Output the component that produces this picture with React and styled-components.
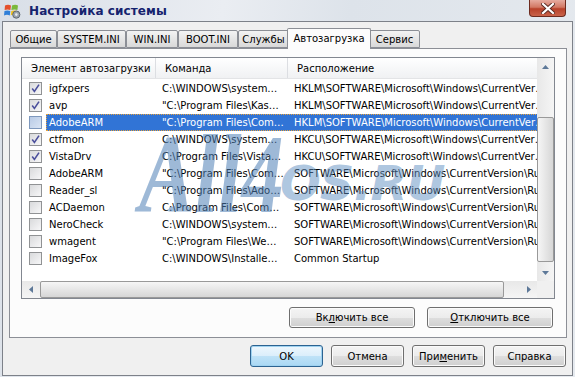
import styled, { createGlobalStyle } from 'styled-components'

const GlobalStyle = createGlobalStyle`
  html, body { margin: 0; padding: 0; }
  body {
    font-family: "DejaVu Sans", Verdana, sans-serif;
    font-size: 10px;
    color: #000;
    background: #dfe4eb;
  }
`

const rows = [
  { on: true, name: 'igfxpers', cmd: 'C:\\WINDOWS\\system…', loc: 'HKLM\\SOFTWARE\\Microsoft\\Windows\\CurrentVer…' },
  { on: true, name: 'avp', cmd: '"C:\\Program Files\\Kas…', loc: 'HKLM\\SOFTWARE\\Microsoft\\Windows\\CurrentVer…' },
  { on: false, sel: true, name: 'AdobeARM', cmd: '"C:\\Program Files\\Com…', loc: 'HKLM\\SOFTWARE\\Microsoft\\Windows\\CurrentVer…' },
  { on: true, name: 'ctfmon', cmd: 'C:\\WINDOWS\\system…', loc: 'HKCU\\SOFTWARE\\Microsoft\\Windows\\CurrentVer…' },
  { on: true, name: 'VistaDrv', cmd: 'C:\\Program Files\\Vista…', loc: 'HKCU\\SOFTWARE\\Microsoft\\Windows\\CurrentVer…' },
  { on: false, name: 'AdobeARM', cmd: '"C:\\Program Files\\Com…', loc: 'SOFTWARE\\Microsoft\\Windows\\CurrentVersion\\Run' },
  { on: false, name: 'Reader_sl', cmd: '"C:\\Program Files\\Ado…', loc: 'SOFTWARE\\Microsoft\\Windows\\CurrentVersion\\Run' },
  { on: false, name: 'ACDaemon', cmd: 'C:\\Program Files\\Com…', loc: 'SOFTWARE\\Microsoft\\Windows\\CurrentVersion\\Run' },
  { on: false, name: 'NeroCheck', cmd: 'C:\\WINDOWS\\system…', loc: 'SOFTWARE\\Microsoft\\Windows\\CurrentVersion\\Run' },
  { on: false, name: 'wmagent', cmd: '"C:\\Program Files\\We…', loc: 'SOFTWARE\\Microsoft\\Windows\\CurrentVersion\\Run' },
  { on: false, name: 'ImageFox', cmd: 'C:\\WINDOWS\\Installe…', loc: 'Common Startup' },
]

const tabs = [
  { label: 'Общие', w: 47 },
  { label: 'SYSTEM.INI', w: 69 },
  { label: 'WIN.INI', w: 52 },
  { label: 'BOOT.INI', w: 60 },
  { label: 'Службы', w: 51 },
  { label: 'Автозагрузка', w: 80, active: true },
  { label: 'Сервис', w: 51 },
]

function Arrow({ dir }) {
  const horiz = dir === 'left' || dir === 'right'
  const pts = {
    up: '0,4 3.5,0 7,4',
    down: '0,0 3.5,4 7,0',
    left: '4,0 0,3.5 4,7',
    right: '0,0 4,3.5 0,7',
  }[dir]
  return (
    <svg width={horiz ? 4 : 7} height={horiz ? 7 : 4} viewBox={horiz ? '0 0 4 7' : '0 0 7 4'}>
      <polygon points={pts} fill="#5d7898" />
    </svg>
  )
}

function AppIcon() {
  return (
    <svg width="17" height="16" viewBox="0 0 17 16">
      <path d="M1 2.5 Q4 1 7 2.5 L6.4 7 Q3.5 5.8 0.6 7 Z" fill="#e4502c" />
      <path d="M8 2.6 Q11 1.2 14 2.4 L13.4 7 Q10.6 5.9 7.4 7 Z" fill="#7bb83a" />
      <path d="M0.5 8 Q3.4 6.8 6.3 8 L5.8 12.4 Q3 11.3 0 12.4 Z" fill="#2f7fd8" />
      <path d="M7.3 8 Q10 6.9 12.5 7.8 L12 12 Q9.5 11 6.8 12.3 Z" fill="#f2c21c" />
      <circle cx="12.3" cy="11.6" r="3.6" fill="#9aa3ad" stroke="#5f6872" strokeWidth="1" />
      <circle cx="12.3" cy="11.6" r="1.3" fill="#e8ecf0" />
    </svg>
  )
}

function Check() {
  return (
    <svg width="11" height="11" viewBox="0 0 11 11">
      <path d="M2.2 5.6 L4.4 8.4 L9 1.6" fill="none" stroke="#4b4f9c" strokeWidth="1.6" />
    </svg>
  )
}

function CloseGlyph() {
  return (
    <svg width="14" height="11" viewBox="0 0 14 11">
      <path d="M2 1 L12 10 M12 1 L2 10" stroke="#5a2a22" strokeWidth="4" strokeLinecap="square" />
      <path d="M2 1 L12 10 M12 1 L2 10" stroke="#ffffff" strokeWidth="2.2" strokeLinecap="square" />
    </svg>
  )
}

export default function App() {
  return (
    <>
      <GlobalStyle />
      <Window>
        <TitleBar>
          <AppIcon />
          <Title>Настройка системы</Title>
          <CloseButton>
            <CloseGlyph />
          </CloseButton>
        </TitleBar>

        <Client>
          <TabStrip>
            {tabs.map((t) => (
              <Tab key={t.label} $w={t.w} $active={t.active}>
                {t.label}
              </Tab>
            ))}
          </TabStrip>

          <Panel>
            <ListView>
              <ListContent>
                <HeaderRow>
                  <HeaderCell $w={134}>Элемент автозагрузки</HeaderCell>
                  <HeaderCell $w={132}>Команда</HeaderCell>
                  <HeaderCell $w={300}>Расположение</HeaderCell>
                </HeaderRow>
                <Rows>
                  {rows.map((r, i) => (
                    <Row key={i}>
                      <CheckCell>
                        <CheckBox $hot={r.sel}>{r.on && <Check />}</CheckBox>
                      </CheckCell>
                      <RowBody $selected={r.sel}>
                        <Cell $w={110} $pad={2}>{r.name}</Cell>
                        <Cell $w={132} $pad={5}>{r.cmd}</Cell>
                        <Cell $w={300} $pad={5}>{r.loc}</Cell>
                      </RowBody>
                    </Row>
                  ))}
                </Rows>
                <MarkBig>All4</MarkBig>
                <MarkSmall>OS.RU</MarkSmall>
              </ListContent>

              <VScroll>
                <ScrollButton>
                  <Arrow dir="up" />
                </ScrollButton>
                <VTrack>
                  <VThumb />
                </VTrack>
                <ScrollButton>
                  <Arrow dir="down" />
                </ScrollButton>
              </VScroll>

              <HScroll>
                <ScrollButton>
                  <Arrow dir="left" />
                </ScrollButton>
                <HTrack>
                  <HThumb />
                </HTrack>
                <ScrollButton>
                  <Arrow dir="right" />
                </ScrollButton>
              </HScroll>

              <Corner />
            </ListView>

            <PanelActions>
              <Button $w={126}>
                Вк<u>л</u>ючить все
              </Button>
              <Button $w={126}>
                <u>О</u>тключить все
              </Button>
            </PanelActions>
          </Panel>

          <Footer>
            <Button $w={73} $h={22} $default>
              OK
            </Button>
            <Button $w={73} $h={22}>
              Отмена
            </Button>
            <Button $w={73} $h={22}>
              При<u>м</u>енить
            </Button>
            <Button $w={73} $h={22}>
              Справка
            </Button>
          </Footer>
        </Client>
      </Window>
    </>
  )
}

const Window = styled.div`
  width: 575px;
  height: 377px;
  display: flex;
  flex-direction: column;
  background: linear-gradient(100deg, #d9dfe7 0%, #eaedf2 35%, #dde3ea 55%, #e6eaef 100%);
  overflow: hidden;
`

const TitleBar = styled.div`
  height: 21px;
  display: flex;
  align-items: center;
  padding-left: 4px;
  flex-shrink: 0;
`

const Title = styled.div`
  margin-left: 8px;
  font-family: "DejaVu Sans", sans-serif;
  font-weight: bold;
  font-size: 12px;
  color: #15236e;
  letter-spacing: 0.1px;
`

const CloseButton = styled.div`
  margin-left: auto;
  margin-right: 9px;
  align-self: flex-start;
  width: 37px;
  height: 17px;
  box-sizing: border-box;
  border: 1px solid #6d2b1f;
  border-top: none;
  border-radius: 0 0 4px 4px;
  background: linear-gradient(#e6ab9f 0%, #d27864 45%, #b8412a 55%, #c9634a 100%);
  display: flex;
  align-items: center;
  justify-content: center;
`

const Client = styled.div`
  flex: 1;
  margin: 0 2px 1px 2px;
  border: 1px solid #7d8189;
  background: #f0f0f0;
  padding: 6px 5px 8px 6px;
  display: flex;
  flex-direction: column;
`

const TabStrip = styled.div`
  height: 20px;
  display: flex;
  align-items: flex-end;
  padding-left: 1px;
`

const Tab = styled.div`
  position: relative;
  box-sizing: border-box;
  width: ${(p) => (p.$active ? p.$w + 4 : p.$w)}px;
  height: ${(p) => (p.$active ? 21 : 18)}px;
  margin: 0 ${(p) => (p.$active ? -2 : 0)}px ${(p) => (p.$active ? -1 : 0)}px;
  z-index: ${(p) => (p.$active ? 2 : 1)};
  border: 1px solid #8c8f96;
  border-bottom: ${(p) => (p.$active ? 'none' : '1px solid #8c8f96')};
  border-radius: 2px 2px 0 0;
  background: ${(p) => (p.$active ? '#fcfcfc' : 'linear-gradient(#f3f3f3, #e3e3e3 60%, #d9d9d9)')};
  display: flex;
  align-items: center;
  justify-content: center;
  padding-bottom: ${(p) => (p.$active ? 2 : 0)}px;
  white-space: nowrap;
`

const Panel = styled.div`
  height: 290px;
  box-sizing: border-box;
  border: 1px solid #8c8f96;
  background: #fcfcfc;
  padding: 8px 11px 9px 11px;
  display: flex;
  flex-direction: column;
`

const ListView = styled.div`
  position: relative;
  width: 534px;
  height: 242px;
  box-sizing: border-box;
  border: 1px solid #828790;
  background: #fff;
  display: grid;
  grid-template-columns: 1fr 17px;
  grid-template-rows: 1fr 17px;
`

const ListContent = styled.div`
  position: relative;
  overflow: hidden;
`

const HeaderRow = styled.div`
  display: flex;
  height: 21px;
  box-sizing: border-box;
  border-bottom: 1px solid #e3e4e6;
  background: linear-gradient(#ffffff, #f7f8f9 50%, #f0f1f3);
`

const HeaderCell = styled.div`
  flex: 0 0 ${(p) => p.$w}px;
  box-sizing: border-box;
  padding-left: 9px;
  line-height: 21px;
  border-right: 1px solid #dcdee2;
  white-space: nowrap;
  overflow: hidden;
`

const Rows = styled.div`
  padding-top: 1px;
`

const Row = styled.div`
  display: flex;
  height: 17px;
  align-items: stretch;
`

const CheckCell = styled.div`
  flex: 0 0 24px;
  box-sizing: border-box;
  padding-left: 7px;
  display: flex;
  align-items: center;
`

const CheckBox = styled.span`
  width: 13px;
  height: 13px;
  box-sizing: border-box;
  border: 1px solid ${(p) => (p.$hot ? '#7e98bd' : '#909294')};
  background: ${(p) =>
    p.$hot ? 'linear-gradient(135deg, #b9cbe6, #d9e4f4)' : 'linear-gradient(135deg, #d9dadc, #f7f7f8)'};
  display: flex;
  align-items: center;
  justify-content: center;
`

const RowBody = styled.div`
  display: flex;
  align-items: center;
  box-sizing: border-box;
  background: ${(p) => (p.$selected ? '#3174d6' : 'transparent')};
  color: ${(p) => (p.$selected ? '#fff' : '#000')};
  border: 1px dotted ${(p) => (p.$selected ? '#e8a23c' : 'transparent')};
`

const Cell = styled.div`
  flex: 0 0 ${(p) => p.$w}px;
  box-sizing: border-box;
  padding-left: ${(p) => p.$pad}px;
  line-height: 15px;
  white-space: nowrap;
  overflow: hidden;
`

/* watermark stamped over the list */
const MarkBig = styled.span`
  position: absolute;
  left: 117px;
  top: 60px;
  font-family: "Liberation Serif", serif;
  font-style: italic;
  font-weight: bold;
  font-size: 112px;
  line-height: 1;
  color: rgba(78, 128, 182, 0.55);
  transform: scaleX(0.75);
  transform-origin: left top;
  pointer-events: none;
`

const MarkSmall = styled.span`
  position: absolute;
  left: 258px;
  top: 101px;
  font-family: "DejaVu Sans", sans-serif;
  font-style: italic;
  font-weight: bold;
  font-size: 48px;
  line-height: 1;
  color: rgba(96, 144, 194, 0.5);
  letter-spacing: -1px;
  pointer-events: none;
`

const VScroll = styled.div`
  display: flex;
  flex-direction: column;
  background: linear-gradient(90deg, #e8e8e8, #f5f5f5);
`

const HScroll = styled.div`
  display: flex;
  background: linear-gradient(#e8e8e8, #f5f5f5);
`

const ScrollButton = styled.div`
  flex: 0 0 17px;
  height: 17px;
  display: flex;
  align-items: center;
  justify-content: center;
`

const VTrack = styled.div`
  flex: 1;
  padding: 42px 0 1px;
  display: flex;
  flex-direction: column;
`

const VThumb = styled.div`
  height: 145px;
  box-sizing: border-box;
  border: 1px solid #999;
  border-radius: 2px;
  background: linear-gradient(90deg, #f6f6f6, #e6e6e6 50%, #d6d6d6);
`

const HTrack = styled.div`
  flex: 1;
  padding: 0 16px 0 1px;
  display: flex;
`

const HThumb = styled.div`
  flex: 1;
  box-sizing: border-box;
  border: 1px solid #999;
  border-radius: 2px;
  background: linear-gradient(#f6f6f6, #e6e6e6 50%, #d6d6d6);
`

const Corner = styled.div`
  background: #f0f0f0;
`

const PanelActions = styled.div`
  margin-top: 8px;
  display: flex;
  justify-content: flex-end;
  gap: 12px;
  padding-right: 2px;
`

const Button = styled.div`
  width: ${(p) => p.$w}px;
  height: ${(p) => p.$h || 21}px;
  box-sizing: border-box;
  border: 1px solid ${(p) => (p.$default ? '#2c6391' : '#6f6f6f')};
  border-radius: 3px;
  box-shadow: inset 0 0 0 1px ${(p) => (p.$default ? '#9fd2f0' : '#fbfbfb')};
  background: ${(p) =>
    p.$default
      ? 'linear-gradient(#eef7fd 0%, #dbeefb 50%, #bfe2f7 51%, #a9d8f4 100%)'
      : 'linear-gradient(#f4f4f4 0%, #ececec 50%, #dedede 51%, #cfcfcf 100%)'};
  display: flex;
  align-items: center;
  justify-content: center;
  white-space: nowrap;
`

const Footer = styled.div`
  margin-top: 7px;
  display: flex;
  justify-content: flex-end;
  gap: 8px;
  padding-right: 1px;
`
